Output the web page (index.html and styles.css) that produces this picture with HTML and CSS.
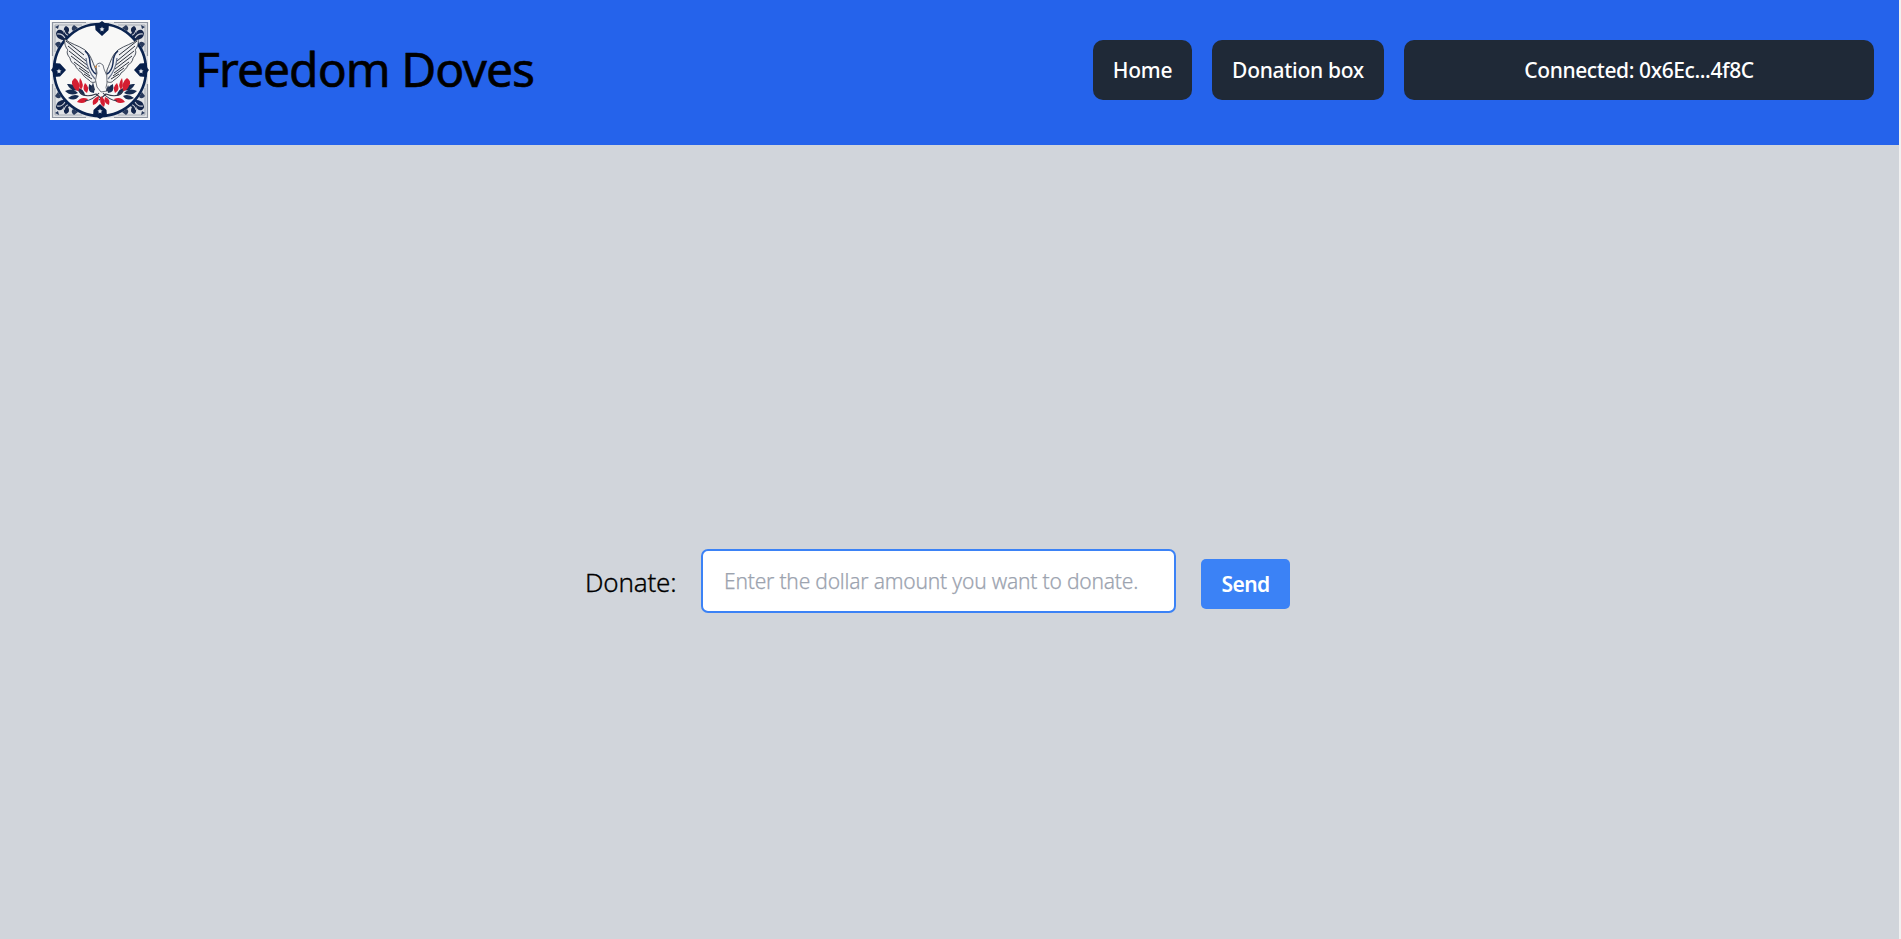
FILE: index.html
```html
<!DOCTYPE html>
<html lang="en">
<head>
<meta charset="utf-8">
<title>Freedom Doves</title>
<link rel="stylesheet" href="styles.css">
</head>
<body>
<div class="app">
  <header class="header">
    <svg class="logo" viewBox="0 0 100 100" aria-label="Freedom Doves logo">
      <defs>
        <g id="corner">
          <path d="M2.500 36V2.500H36" fill="none" stroke="#8e949f" stroke-width="1.200"/>
          <path d="M5 32V5H32" fill="none" stroke="#a8adb6" stroke-width="1"/>
          <path d="M8 18Q4 13 8 10Q13 9 14 14Q13 7 16 6Q21 8 18 13Q23 15 20 19Q14 22 8 18Z" fill="#14254a"/>
          <path d="M5 24Q8 20 11 23L8 28ZM24 5Q20 8 23 11L28 8ZM5 7L9 5L8 9Z" fill="#293a5c"/>
          <path d="M7 14Q12 13 15 18M14 10Q15 15 20 16" fill="none" stroke="#c9ced7" stroke-width="1.100"/>
        </g>
        <path id="point" d="M43 3.500Q47 4 50 1Q53 4 57 3.500L56.500 10L50 16L43.500 10Z" fill="#071f4b"/>
        <path id="star" d="M50 6.500L50.700 8.200L52.500 8.500L51.200 9.700L51.500 11.500L50 10.600L48.500 11.500L48.800 9.700L47.500 8.500L49.300 8.200Z" fill="#e7eaf0"/>
        <g id="wing">
          <path d="M46 50C42 41 41 35 35 30C28 25 20 24 15 19C14 24 16 28 18 30C16 32 18 36 20 38C20 41 23 44 25 45C26 48 29 51 32 53C33 56 36 58 39 60C41 63 44 63 47 61Z" fill="#f0f1f3" stroke="#39414d" stroke-width=".9"/>
          <path d="M16 21Q25 28 34 35M18 26L36 41M19 31L37 45M21 36L38 49M24 42L39 53M29 48L40 56M34 54L42 59" fill="none" stroke="#2c333e" stroke-width="1"/>
          <path d="M35 31Q40 35 40 43Q41 51 46 54" fill="none" stroke="#182d58" stroke-width="1.500"/>
          <path d="M36 38Q37 50 45 59" fill="none" stroke="#66728b" stroke-width="1.200"/>
        </g>
        <g id="laurel">
          <path d="M17 64Q25 63 28 70Q21 72 17 64ZM15 71Q22 67 28 73Q21 77 15 71ZM18 78Q24 73 29 76Q25 82 18 78ZM27 68Q34 68 35 76Q29 75 27 68ZM39 64Q46 67 44 73Q37 72 39 65Z" fill="#172c50"/>
          <path d="M23 66Q20 61 25 58Q31 62 29 71Q25 71 23 66ZM30 58Q35 65 31 70Q28 65 30 58ZM35 63Q40 67 37 73Q31 70 35 63ZM27 82Q31 76 38 79Q35 85 27 82Z" fill="#d41e32"/>
          <path d="M29 70Q33 79 46 74L53 80M35 81Q43 80 49 73" fill="none" stroke="#34384a" stroke-width="1.100"/>
        </g>
      </defs>
      <rect width="100" height="100" fill="#fafafa"/>
      <rect x="2" y="2" width="96" height="96" fill="#dfe1e4"/>
      <use href="#corner"/>
      <use href="#corner" transform="matrix(-1 0 0 1 100 0)"/>
      <use href="#corner" transform="matrix(1 0 0 -1 0 100)"/>
      <use href="#corner" transform="rotate(180 50 50)"/>
      <circle cx="50" cy="50" r="46" fill="#f8f8f7" stroke="#0b2450" stroke-width="2.600"/>
      <use href="#point" x="2"/><use href="#star" x="2"/>
      <use href="#point" transform="translate(0 100) scale(1 -1)"/><use href="#star" y="82"/>
      <use href="#point" transform="translate(100 0) rotate(90)"/><use href="#star" x="41" y="42"/>
      <use href="#point" transform="translate(0 100) rotate(270)"/><use href="#star" x="-41" y="42"/>
      <use href="#wing"/>
      <use href="#wing" transform="matrix(-1 0 0 1 103 0)"/>
      <use href="#laurel"/>
      <use href="#laurel" transform="matrix(-1 0 0 1 102 0)"/>
      <path d="M51 76Q57 81 54 87Q48 83 51 76ZM49 76Q41 79 43 85Q49 84 49 76ZM55 77Q61 79 59 85Q53 83 55 77Z" fill="#d41e32"/>
      <path d="M46 46Q47 43 50 43Q54 44 54 49Q58 55 57 63Q55 68 57 71L51 72L47 67Q44 60 47 53Z" fill="#fafafa" stroke="#4c5360" stroke-width=".8"/>
      <path d="M44.500 47L46.500 45V48Z" fill="#df8427"/>
      <circle cx="49" cy="46" r=".6" fill="#14254a"/>
      <path d="M43 62L45 70L40 72ZM58 65L56 71L61 72Z" fill="#293653"/>
    </svg>
    <h1 class="title">Freedom Doves</h1>
    <nav class="nav">
      <a class="nav-button home">Home</a>
      <a class="nav-button box">Donation box</a>
      <button class="nav-button wallet">Connected: 0x6Ec...4f8C</button>
    </nav>
  </header>
  <main class="main">
    <form class="form">
      <label class="label" for="amount">Donate:</label>
      <input class="amount" id="amount" type="text" placeholder="Enter the dollar amount you want to donate.">
      <button class="send" type="button">Send</button>
    </form>
  </main>
</div>
</body>
</html>
```
FILE: styles.css
```css
* { box-sizing: border-box; }
body { margin: 0; background: #f1f1f1; font-family: "Noto Sans", "Open Sans", sans-serif; }
.app { width: 1899px; height: 939px; display: flex; flex-direction: column; background: #d1d5db; }
.header { height: 145px; padding: 20px 25px 25px 50px; display: flex; background: #2563eb; }
.logo { width: 100px; height: 100px; flex: none; }
.title { margin: 15px 0 0 45px; font-size: 48px; line-height: 68px; font-weight: 400; letter-spacing: -0.95px; -webkit-text-stroke: 0.6px #000; color: #000; white-space: nowrap; }
.nav { margin-left: auto; padding-top: 20px; display: flex; gap: 20px; }
.nav-button { height: 60px; border: 0; border-radius: 10px; padding: 0; background: #1f2937; color: #fff; font-family: inherit; font-size: 21px; font-weight: 500; line-height: 60px; text-align: center; white-space: nowrap; }
.home { width: 99px; letter-spacing: -0.3px; }
.box { width: 172px; letter-spacing: -0.3px; }
.wallet { width: 470px; letter-spacing: -0.4px; }
.main { flex: 1; padding: 404px 0 0 585px; }
.form { display: flex; align-items: flex-start; }
.label { width: 116px; font-size: 26px; font-weight: 300; line-height: 66px; letter-spacing: -0.2px; -webkit-text-stroke: 0.3px #000; color: #000; }
.amount { width: 475px; height: 64px; border: 2px solid #3b82f6; border-radius: 7px; padding: 0 21px; outline: 0; background: #fff; font-family: inherit; font-size: 21px; font-weight: 300; letter-spacing: -0.2px; }
.amount::placeholder { color: #9ca3af; opacity: 1; -webkit-text-stroke: 0.25px #9ca3af; }
.send { width: 89px; height: 50px; margin: 10px 0 0 25px; padding: 0; border: 0; border-radius: 5px; background: #3b82f6; color: #fff; font-family: inherit; font-size: 21px; font-weight: 600; line-height: 50px; letter-spacing: -0.6px; }
```
